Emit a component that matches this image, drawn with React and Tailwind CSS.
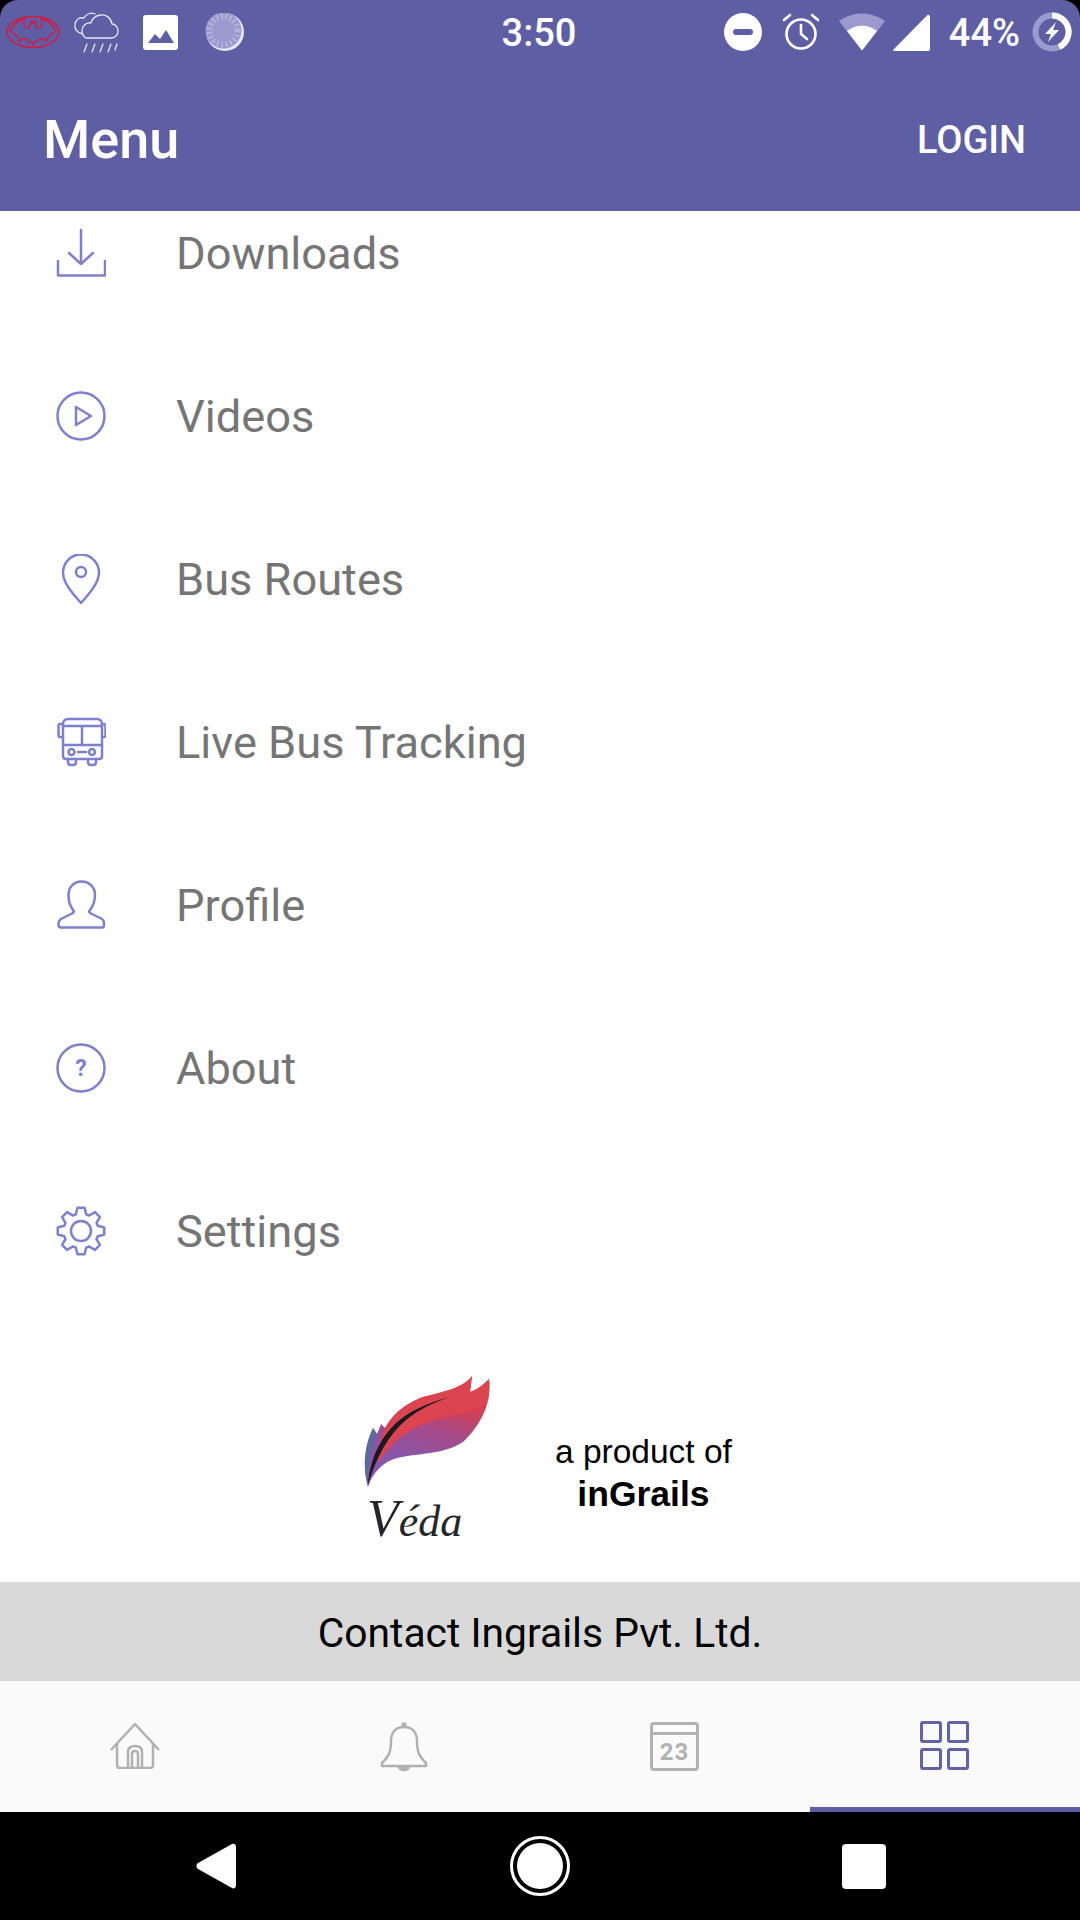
import React from 'react';

const ROBOTO = { fontFamily: 'Roboto, sans-serif' };

const menuIcon = 'w-[50px] h-[50px] fill-none stroke-[#7f7fcf] stroke-[2.5] shrink-0';

const DownloadIcon = () => (
  <svg viewBox="0 0 50 50" className={menuIcon} strokeLinecap="round" strokeLinejoin="round">
    <path d="M25 2V36M13 25L25 36L37 25M2 33V47.500H49V33" />
  </svg>
);

const VideoIcon = () => (
  <svg viewBox="0 0 50 50" className={menuIcon} strokeLinejoin="round">
    <circle cx="25" cy="25" r="23.500" />
    <path d="M20 16L35 25L20 34Z" />
  </svg>
);

const PinIcon = () => (
  <svg viewBox="0 0 50 50" className={menuIcon}>
    <path d="M25 49C15 38 7 28 7 18.500A18 18 0 0 1 43 18.500C43 28 35 38 25 49Z" />
    <circle cx="25" cy="18" r="5" />
  </svg>
);

const BusIcon = () => (
  <svg viewBox="0 0 50 50" className={menuIcon} strokeLinecap="round" strokeLinejoin="round">
    <path d="M7 7C7 4 9 2 12 2H41C44 2 46 4 46 7V39C46 41 45 42 43 42H10C8 42 7 41 7 39Z" />
    <path d="M7 9H46M7 28H46M26 9V28M22 35H30" />
    <path d="M7 7H4C3 7 2.500 8 2.500 9V18C2.500 19 3 20 4 20H7M46 7H48C49 7 49.500 8 49.500 9V18C49.500 19 49 20 48 20H46" />
    <circle cx="15.500" cy="35" r="3" />
    <circle cx="36" cy="35" r="3" />
    <path d="M12 42V45C12 47 13.500 48 15 48H17C19 48 20 47 20 45V42M32 42V45C32 47 33 48 35 48H37C39 48 40 47 40 45V42" />
  </svg>
);

const ProfileIcon = () => (
  <svg viewBox="0 0 50 50" className={menuIcon} strokeLinejoin="round">
    <path d="M2.500 43C2.500 41 3.500 40 5 39L17 33C18 32 18 31 17 30C14 26 12.500 22 12.500 15C12.500 7 18 1.500 25.500 1.500C33 1.500 39 7 39 15C39 22 37 26 34 30C33 31 33 32 34 33L46 39C47.500 40 48 41 48 43V45C48 46.500 47 47.500 46 47.500H5C3.500 47.500 2.500 46.500 2.500 45Z" />
  </svg>
);

const AboutIcon = () => (
  <svg viewBox="0 0 50 50" className={menuIcon}>
    <circle cx="25" cy="25" r="23.500" />
    <text x="25" y="33" textAnchor="middle" fontSize="23" fontWeight="700" fontFamily="Roboto, sans-serif" fill="#7f7fcf" stroke="none">?</text>
  </svg>
);

const gearPoints = () => {
  const pts = [];
  for (let i = 0; i < 8; i++) {
    const mid = (i * Math.PI) / 4 - Math.PI / 2;
    [[17.5, -0.3], [23.5, -0.15], [23.5, 0.15], [17.5, 0.3]].forEach(([r, a]) => {
      pts.push(`${(25 + r * Math.cos(mid + a)).toFixed(2)},${(25 + r * Math.sin(mid + a)).toFixed(2)}`);
    });
  }
  return pts.join(' ');
};

const GearIcon = () => (
  <svg viewBox="0 0 50 50" className={menuIcon} strokeLinejoin="round">
    <polygon points={gearPoints()} />
    <circle cx="25" cy="25" r="10" />
  </svg>
);

const items = [
  ['Downloads', DownloadIcon],
  ['Videos', VideoIcon],
  ['Bus Routes', PinIcon],
  ['Live Bus Tracking', BusIcon],
  ['Profile', ProfileIcon],
  ['About', AboutIcon],
  ['Settings', GearIcon],
];

const StatusLeft = () => (
  <div className="flex-1 flex items-center pl-[6px]">
    <svg viewBox="0 0 54 32" className="w-[54px] h-[32px] fill-none stroke-[#d9173c] stroke-[1.4]">
      <ellipse cx="27" cy="16" rx="26" ry="15.500" />
      <path d="M4 15C8 7 13 4 19 2.500C16 8 19 13 23 12L25 5L27 7L29 5L31 12C35 13 38 8 35 2.500C41 4 46 7 50 15C45 18 42 20 40 25C37 21 33 22 31 26C29 25 28 26 27 29C26 26 25 25 23 26C21 22 17 21 14 25C12 20 9 18 4 15Z" />
    </svg>
    <svg viewBox="0 0 46 42" className="w-[46px] h-[42px] ml-[13px] fill-none stroke-[#e4e4f4] stroke-[1.3]" strokeLinecap="round">
      <path d="M10 23C4 22 1 18 2 13C3 8 7 6 11 7C13 3 18 1 22 3" />
      <path d="M13 27H38C43 27 45 23 45 20C45 16 42 13 39 13C38 7 33 3 27 4C22 5 19 8 18 12C13 11 9 15 9 20C9 24 11 26 13 27Z" />
      <path d="M11 41L14 33M19 41L22 33M27 41L30 33M35 41L38 33M42 39L44 33" />
    </svg>
    <svg viewBox="0 0 35 35" className="w-[35px] h-[35px] ml-[24px]">
      <rect width="35" height="35" rx="3" fill="#fff" />
      <path d="M5 28L12 19L17 24L23 15L31 28Z" fill="#5e5ea5" />
    </svg>
    <svg viewBox="0 0 40 38" className="w-[40px] h-[38px] ml-[27px]">
      <circle cx="20" cy="19" r="19" fill="#e6e6f4" />
      <circle cx="18.500" cy="17.500" r="18" fill="#9a9acf" />
      <circle cx="18.500" cy="17.500" r="14" fill="none" stroke="#b9b9dd" strokeWidth="6" strokeDasharray="1.500 3" />
    </svg>
  </div>
);

const StatusRight = () => (
  <div className="flex-1 flex items-center justify-end pr-[8px]">
    <svg viewBox="0 0 38 38" className="w-[38px] h-[38px]">
      <circle cx="19" cy="19" r="19" fill="#fff" />
      <rect x="9" y="16" width="20" height="6" rx="3" fill="#5e5ea5" />
    </svg>
    <svg viewBox="0 0 38 38" className="w-[38px] h-[38px] ml-[20px] fill-none stroke-white stroke-[2.6]" strokeLinecap="round">
      <circle cx="19" cy="21" r="14.500" />
      <path d="M19 12V21L25 26M2 7L8 2M36 7L30 2" />
    </svg>
    <svg viewBox="0 0 46 38" className="w-[46px] h-[38px] ml-[19px]">
      <path d="M23 37.500L0 8C14 -2 32 -2 46 8Z" fill="#9a9acf" />
      <path d="M23 37.500L8 18C17 11 29 11 38 18Z" fill="#fff" />
    </svg>
    <svg viewBox="0 0 37 37" className="w-[37px] h-[37px] ml-[8px]">
      <path d="M35 0.500L37 2V35C37 36 36 37 35 37H1C0 37 0 36 0.500 35.500Z" fill="#fff" />
    </svg>
    <span className="ml-[19px] text-[38px] leading-none font-medium text-white pt-[2px]" style={ROBOTO}>44%</span>
    <svg viewBox="0 0 40 40" className="w-[40px] h-[40px] ml-[12px]">
      <circle cx="20" cy="20" r="16.500" fill="none" stroke="#9a9acf" strokeWidth="6" />
      <path d="M20 3.500A16.500 16.500 0 0 1 27 35" fill="none" stroke="#fff" strokeWidth="6" />
      <path d="M24 10L13 22H19L16 30L27 18H21Z" fill="#fff" />
    </svg>
  </div>
);

const Feather = () => (
  <svg viewBox="0 0 167 190" className="w-[167px] h-[190px] shrink-0">
    <defs>
      <linearGradient id="veda" x1="0.700" y1="0.250" x2="0.500" y2="0.800">
        <stop offset="0" stopColor="#d23f55" />
        <stop offset="0.450" stopColor="#a64a88" />
        <stop offset="1" stopColor="#8a55a8" />
      </linearGradient>
    </defs>
    <path d="M28 127C22 105 25 85 33 68L37 74L41 64L45 68C55 50 70 42 83 37C103 32 123 28 132 16L130 32C137 30 143 25 149 19C152 40 143 63 123 82C103 95 77 93 57 98C43 102 33 112 28 127Z" fill="url(#veda)" />
    <path d="M45 68C55 50 70 42 83 37C103 32 123 28 132 16L130 32C137 30 143 25 149 19C150 30 148 38 145 46C125 55 100 55 75 68C60 75 48 88 38 102C38 90 40 78 45 68Z" fill="#dc4450" />
    <path d="M28 127C22 105 25 85 33 68L37 74C30 90 28 108 28 127Z" fill="#5b6a9c" />
    <path d="M28 125C30 95 45 65 75 50C85 45 95 41 110 37C92 43 78 50 66 60C48 75 36 98 28 125Z" fill="#1a1a1f" />
    <text x="27" y="176" fontFamily="'Liberation Serif', serif" fontStyle="italic" fill="#26262a">
      <tspan fontSize="52">V</tspan>
      <tspan fontSize="44">éda</tspan>
    </text>
  </svg>
);

const TabBar = () => (
  <div className="grid grid-cols-4 h-[131px] bg-[#fafafa] shrink-0">
    <div className="flex items-center justify-center pb-[2px]">
      <svg viewBox="0 0 50 46" className="w-[50px] h-[46px] fill-none stroke-[#b1b1b1] stroke-[2.5]" strokeLinejoin="round">
        <path d="M1 27L25 1L49 27M7 21V42C7 44 8 45 10 45H40C42 45 43 44 43 42V21" />
        <path d="M18 45V29C18 25 21 23 25 23C29 23 32 25 32 29V45M22 45V31C22 29 23 28 25 28C27 28 28 29 28 31V45" />
      </svg>
    </div>
    <div className="flex items-center justify-center pr-[2px]">
      <svg viewBox="0 0 48 50" className="w-[48px] h-[50px] fill-none stroke-[#b1b1b1] stroke-[2.5]" strokeLinejoin="round">
        <path d="M24 5C15 5 11 11 11 19C11 30 9 34 2 41V44H46V41C39 34 37 30 37 19C37 11 33 5 24 5Z" />
        <circle cx="24" cy="3" r="1.500" fill="#b1b1b1" />
        <path d="M19 45C20 49 28 49 29 45Z" fill="#b1b1b1" />
      </svg>
    </div>
    <div className="flex items-center justify-center pr-[1px]">
      <div className="w-[49px] h-[49px] flex flex-col border-[3px] border-[#b1b1b1] rounded-[4px]">
        <div className="h-[7px] border-b-[3px] border-[#b1b1b1] box-content" />
        <div className="flex-1 flex items-center justify-center text-[24px] leading-none font-bold text-[#b1b1b1] tracking-[1px]" style={ROBOTO}>23</div>
      </div>
    </div>
    <div className="flex flex-col h-full">
      <div className="flex-1 flex items-center justify-center pt-[2px] pr-[2px]">
        <div className="grid grid-cols-2 gap-[5px]">
          <div className="w-[22px] h-[22px] border-[3px] border-[#6262a8] rounded-[3px]" />
          <div className="w-[22px] h-[22px] border-[3px] border-[#6262a8] rounded-[3px]" />
          <div className="w-[22px] h-[22px] border-[3px] border-[#6262a8] rounded-[3px]" />
          <div className="w-[22px] h-[22px] border-[3px] border-[#6262a8] rounded-[3px]" />
        </div>
      </div>
      <div className="h-[5px] bg-[#5e5ea5]" />
    </div>
  </div>
);

const NavBar = () => (
  <div className="grid grid-cols-3 items-center justify-items-center px-[54px] h-[108px] bg-black shrink-0">
    <svg viewBox="0 0 40 46" className="w-[40px] h-[46px]">
      <path d="M36 1C38 0 40 1 40 4V42C40 45 38 46 36 45L2 26C0 25 0 21 2 20Z" fill="#fff" />
    </svg>
    <div className="w-[60px] h-[60px] rounded-full border-[3px] border-white flex items-center justify-center">
      <div className="w-[46px] h-[46px] rounded-full bg-white" />
    </div>
    <div className="w-[44px] h-[45px] rounded-[4px] bg-white" />
  </div>
);

const App = () => (
  <div className="w-[1080px] h-[1920px] flex flex-col bg-black overflow-hidden" style={ROBOTO}>
    <div className="relative z-10 h-[211px] shrink-0 flex flex-col bg-[#5e5ea5] rounded-t-[18px]">
      <div className="h-[64px] flex items-center">
        <StatusLeft />
        <span className="text-[38px] leading-none font-medium text-white pt-[2px]">3:50</span>
        <StatusRight />
      </div>
      <div className="flex-1 flex items-center justify-between pl-[43px] pr-[54px] pt-[4px]">
        <span className="text-[54px] leading-none font-medium text-white">Menu</span>
        <span className="text-[38px] leading-none font-medium text-white">LOGIN</span>
      </div>
    </div>
    <div className="flex-1 flex flex-col bg-white overflow-hidden">
      <div className="flex flex-col -mt-[40px]">
        {items.map(([label, Icon]) => (
          <div key={label} className="h-[163px] shrink-0 flex items-center pl-[56px]">
            <Icon />
            <span className="ml-[70px] pt-[2px] text-[45.2px] leading-none text-[#757575]">{label}</span>
          </div>
        ))}
      </div>
      <div className="flex items-center pl-[340px] mt-[48px]">
        <Feather />
        <div className="ml-[48px] pt-[35px] flex flex-col items-center text-black" style={{ fontFamily: '"Liberation Sans", sans-serif' }}>
          <span className="text-[33.5px] leading-[42px]">a product of</span>
          <span className="text-[35.5px] leading-[42px] font-bold">inGrails</span>
        </div>
      </div>
    </div>
    <div className="h-[99px] shrink-0 flex items-center justify-center pt-[3px] bg-[#d9d9d9] text-[40.8px] leading-none text-black">
      Contact Ingrails Pvt. Ltd.
    </div>
    <TabBar />
    <NavBar />
  </div>
);

export default App;
